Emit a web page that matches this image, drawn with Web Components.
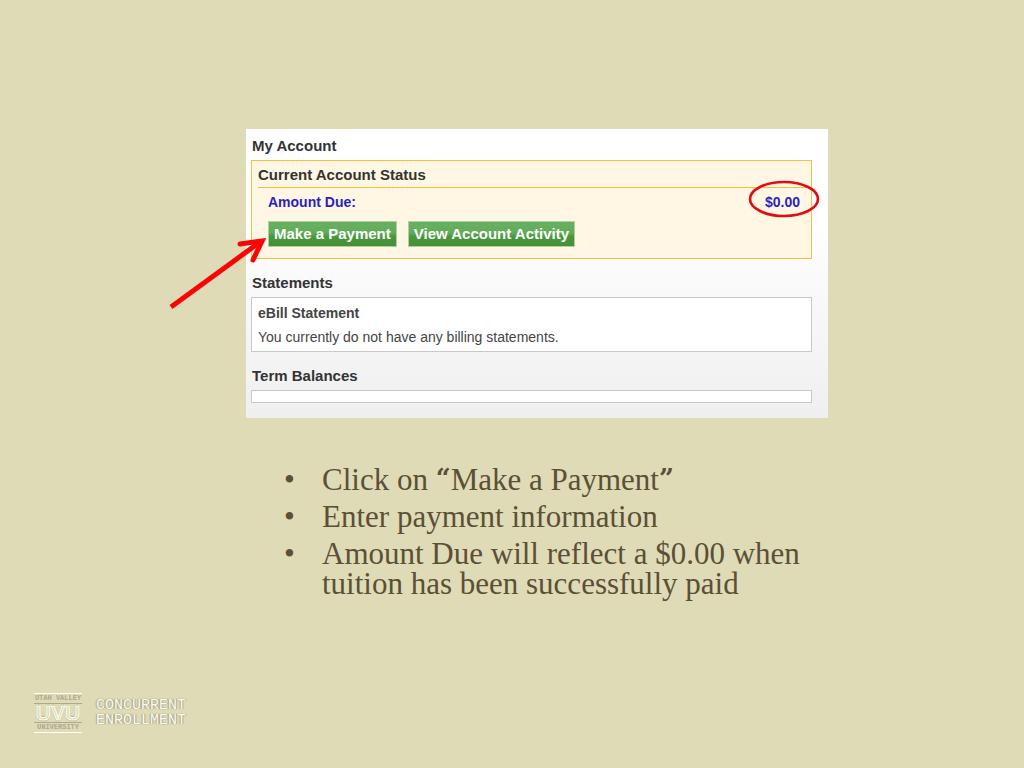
<!DOCTYPE html>
<html lang="en">
<head>
<meta charset="utf-8">
<title>My Account: make a payment</title>
<style>
html, body { margin: 0; min-height: 100%; background: #dfdbb6; }
</style>
</head>
<body>
<payment-slide></payment-slide>
<script>
const define = (name, html) => customElements.define(name, class extends HTMLElement {
  constructor() {
    super();
    const template = document.createElement('template');
    template.innerHTML = html;
    this.attachShadow({ mode: 'open' }).append(template.content.cloneNode(true));
  }
});

define('action-button', `
<style>
:host { display: block; }
button { display: block; margin: 0; height: 26px; padding: 0 5px; border: 1px solid #b0d09e; border-radius: 0;
  background: linear-gradient(#68b162 0, #62ab5a 45%, #48983f 60%, #448f38 100%);
  color: #fff; font: bold 15px/24px "Liberation Sans", Arial, sans-serif; white-space: nowrap; cursor: pointer; }
</style>
<button type="button"><slot></slot></button>`);

define('account-section', `
<style>
:host { display: block; }
h2 { margin: 0 0 5px; padding-left: 1px; font-size: 15px; line-height: 18px; font-weight: bold; color: #333; }
.box { box-sizing: border-box; background: #fff; border: 1px solid #c8c8c8; }
:host([highlight]) .box { background: #fff7e3; border-color: #edc240; }
</style>
<h2><slot name="title"></slot></h2>
<div class="box"><slot></slot></div>`);

define('amount-due', `
<style>
:host { display: flex; justify-content: space-between; font-weight: bold; font-size: 14px; line-height: 18px; color: #2a1fc0; }
.value { position: relative; }
svg { position: absolute; left: -17px; top: -13px; width: 72px; height: 38px; pointer-events: none; }
</style>
<span><slot name="label"></slot></span>
<span class="value"><slot name="value"></slot>
<svg viewBox="0 0 72 38" aria-hidden="true"><ellipse cx="36" cy="19" rx="34" ry="17" fill="none" stroke="#e30b13" stroke-width="2.6"/></svg></span>`);

define('account-panel', `
<style>
:host { display: block; position: relative; box-sizing: border-box; padding: 8px 16px 15px 5px;
  background: linear-gradient(#fff 0, #fff 30%, #efeff0 100%);
  font-family: "Liberation Sans", Arial, sans-serif; color: #444; }
main { display: grid; gap: 15px; }
h3 { margin: 0 0 0 6px; font-size: 15px; line-height: 18px; color: #333; }
.status h3 { padding: 5px 0 3px; border-bottom: 1px solid #edc240; }
amount-due { padding: 5px 11px 10px 16px; }
.actions { display: flex; gap: 11px; padding: 0 0 11px 16px; }
.bill { padding: 6px 0 4px 6px; }
.bill h3 { margin: 0 0 6px; font-size: 14px; color: #444; }
.bill p { margin: 0; font-size: 14px; line-height: 19px; }
.empty { height: 11px; }
.arrow { position: absolute; left: -80px; top: 104px; width: 104px; height: 80px; pointer-events: none; }
</style>
<main>
<account-section highlight><span slot="title">My Account</span>
  <div class="status"><h3>Current Account Status</h3>
  <amount-due><span slot="label">Amount Due:</span><span slot="value">$0.00</span></amount-due>
  <div class="actions"><action-button>Make a Payment</action-button><action-button>View Account Activity</action-button></div></div>
</account-section>
<account-section><span slot="title">Statements</span>
  <div class="bill"><h3>eBill Statement</h3><p>You currently do not have any billing statements.</p></div>
</account-section>
<account-section><span slot="title">Term Balances</span><div class="empty"></div></account-section>
</main>
<svg class="arrow" viewBox="0 0 104 80" aria-hidden="true"><g fill="none" stroke="#fa0505" stroke-width="5"><path d="M5 74 L94 9"/><path d="M74 11 L96 8 L87 27" stroke-linecap="round"/></g></svg>`);

define('instruction-list', `
<style>
:host { display: block; font-family: "Liberation Serif", "Times New Roman", serif; color: #5b5036; }
ul { margin: 0; padding: 0; list-style: none; display: grid; gap: 7px; }
li { display: grid; grid-template-columns: 38px 1fr; font-size: 31px; line-height: 30px; }
li::before { content: "•"; }
.quote { font: bold 26px/1px "DejaVu Serif", serif; vertical-align: 3px; }
</style>
<ul>
<li><span>Click on <span class="quote">“</span>Make a Payment<span class="quote">”</span></span></li>
<li><span>Enter payment information</span></li>
<li><span>Amount Due will reflect a $0.00 when tuition has been successfully paid</span></li>
</ul>`);

define('uvu-brand', `
<style>
:host { display: flex; align-items: center; gap: 14px; font-family: "Liberation Mono", monospace; font-weight: bold; }
.mark { display: flex; flex-direction: column; align-items: center; width: 48px; border: solid #fffff4; border-width: 1px 0; white-space: nowrap; }
.small { height: 9px; font-size: 7px; line-height: 9px; color: #aca98d; }
.uvu { width: 100%; height: 20px; box-sizing: border-box; border: solid #aca98d; border-width: 1px 0; text-align: center;
  font: bold 21px/18px "Liberation Sans", Arial, sans-serif; color: #dfdbb6; -webkit-text-stroke: 1px #fffff4; text-shadow: 0 1px 1px #8f8c74, 0 -1px 1px #8f8c74; }
.name { display: grid; font-size: 15px; line-height: 15px; font-weight: normal; color: #fbfaee; text-shadow: 0 0 1px #aaa78c, 1px 0 1px #aaa78c, -1px 0 1px #aaa78c; }
</style>
<div class="mark"><span class="small">UTAH VALLEY</span><span class="uvu">UVU</span><span class="small">UNIVERSITY</span></div>
<div class="name"><span>CONCURRENT</span><span>ENROLLMENT</span></div>`);

define('payment-slide', `
<style>
:host { display: flex; flex-direction: column; box-sizing: border-box; min-height: 100vh; padding: 129px 0 35px; }
account-panel { margin: 0 196px 0 246px; }
instruction-list { margin: 47px 196px 32px 284px; }
uvu-brand { margin: auto 0 0 34px; }
</style>
<account-panel></account-panel>
<instruction-list></instruction-list>
<uvu-brand></uvu-brand>`);
</script>
</body>
</html>
